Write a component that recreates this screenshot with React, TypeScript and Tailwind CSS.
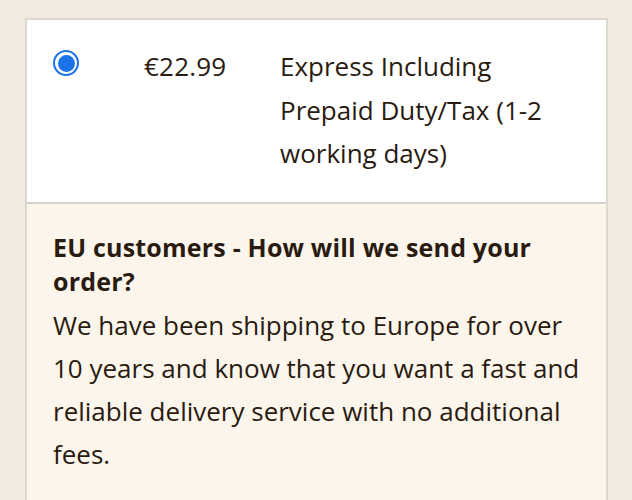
export default function App() {
  return (
    <div className="w-[632px] h-[500px] overflow-hidden bg-[#f1ebdf] pt-[18px] pl-[25px]" style={{ fontFamily: "'Open Sans', 'Noto Sans', sans-serif" }}>
      <div className="w-[583px] h-[600px] border-2 border-[#dcd8cf] text-[#2a1b10] bg-[#fcf5eb]">
        <div className="bg-white flex pt-[25px] pb-[26px] border-b-2 border-[#d6d2ca]">
          <div className="w-[26px] ml-[26px] mt-[5px] shrink-0">
            <div className="w-[26px] h-[26px] rounded-full border-2 border-[#1a73e8] flex items-center justify-center">
              <div className="w-[17px] h-[17px] rounded-full bg-[#1a73e8]" />
            </div>
          </div>
          <div className="ml-[65px] w-[136px] shrink-0 text-[26px] leading-[43.5px] tracking-[0.2px]">€22.99</div>
          <div className="w-[290px] text-[26px] leading-[43.5px]">Express Including Prepaid Duty/Tax (1-2 working days)</div>
        </div>
        <div className="px-[26px] pt-[26px]">
          <div className="w-[530px] text-[25px] leading-[34px] font-bold tracking-[0.2px]">EU customers - How will we send your order?</div>
          <div className="w-[540px] text-[26px] leading-[43px] mt-[6px]">We have been shipping to Europe for over 10 years and know that you want a fast and reliable delivery service with no additional fees.</div>
        </div>
      </div>
    </div>
  );
}
